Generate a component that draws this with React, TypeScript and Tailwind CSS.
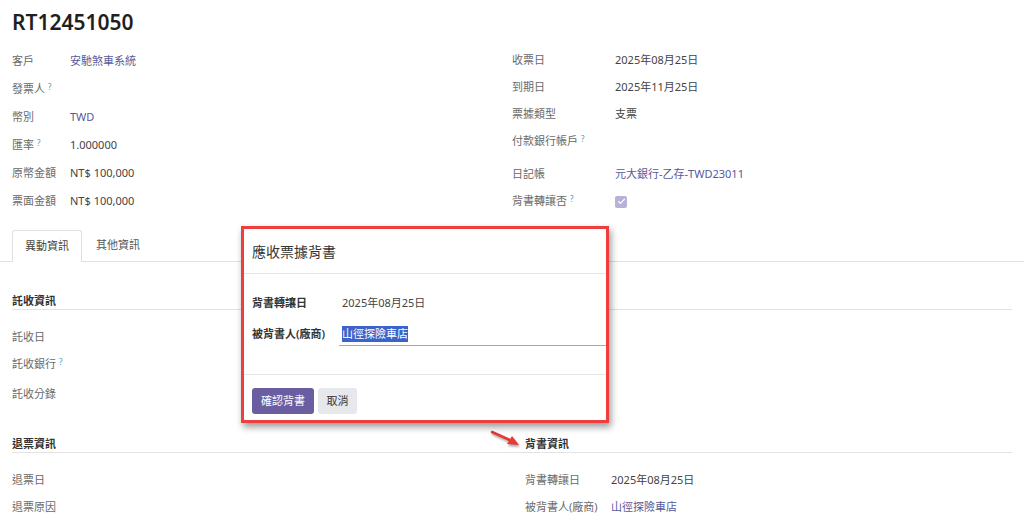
import { Check } from "lucide-react"

const LINK = "text-[#56599a]"

const Help = () => (
  <sup className="ml-[3px] text-[8px] text-[#4f93c4] relative -top-[3px]">?</sup>
)

const Field = ({
  label,
  value,
  help,
  link,
  labelW,
  h = "h-[28px]",
}: {
  label: string
  value?: React.ReactNode
  help?: boolean
  link?: boolean
  labelW: string
  h?: string
}) => (
  <div className={`flex items-center ${h}`}>
    <div className={`${labelW} shrink-0 text-[#6a6a6a]`}>
      {label}
      {help && <Help />}
    </div>
    <div className={link ? LINK : "text-[#444]"}>{value}</div>
  </div>
)

const SectionHeader = ({ title }: { title?: string }) => (
  <div className="leading-[16px] h-[17px] font-semibold text-[#333] border-b border-[#e3e3e3]">
    {title ?? "\u00a0"}
  </div>
)

const App = () => {
  return (
    <div className="relative w-[1024px] h-[530px] overflow-hidden bg-white text-[11px] font-['Noto_Sans','Noto_Sans_CJK_TC',sans-serif]">
      <div className="px-[12px] pt-[8px] text-[21px] leading-[28px] font-semibold text-[#1f1f1f]">
        RT12451050
      </div>

      {/* main fields */}
      <div className="grid grid-cols-[500px_1fr] px-[12px] mt-[11px]">
        <div className="flex flex-col">
          <Field labelW="w-[58px]" label="客戶" value="安馳煞車系統" link />
          <Field labelW="w-[58px]" label="發票人" help />
          <Field labelW="w-[58px]" label="幣別" value="TWD" link />
          <Field labelW="w-[58px]" label="匯率" help value="1.000000" />
          <Field labelW="w-[58px]" label="原幣金額" value="NT$ 100,000" />
          <Field labelW="w-[58px]" label="票面金額" value="NT$ 100,000" />
        </div>
        <div className="flex flex-col">
          <Field labelW="w-[103px]" h="h-[27px]" label="收票日" value="2025年08月25日" />
          <Field labelW="w-[103px]" h="h-[27px]" label="到期日" value="2025年11月25日" />
          <Field labelW="w-[103px]" h="h-[27px]" label="票據類型" value="支票" />
          <Field labelW="w-[103px]" h="h-[27px]" label="付款銀行帳戶" help />
          <div className="mt-[6px]">
            <Field labelW="w-[103px]" h="h-[27px]" label="日記帳" value="元大銀行-乙存-TWD23011" link />
          </div>
          <Field
            labelW="w-[103px]"
            h="h-[27px]"
            label="背書轉讓否"
            help
            value={
              <span className="flex items-center justify-center w-[12px] h-[12px] rounded-[2px] bg-[#b9b1d8]">
                <Check size={9} strokeWidth={3} className="text-white" />
              </span>
            }
          />
        </div>
      </div>

      {/* tabs */}
      <div className="mt-[15px] flex h-[32px] pl-[12px] border-b border-[#dee2e6]">
        <div className="-mb-px flex items-center px-[12px] bg-white border border-b-0 border-[#dee2e6] rounded-t-[3px] text-[#444]">
          異動資訊
        </div>
        <div className="flex items-center px-[14px] text-[#555]">其他資訊</div>
      </div>

      {/* tab content */}
      <div className="px-[12px]">
        <div className="grid grid-cols-[513px_1fr] mt-[31px]">
          <div className="flex flex-col">
            <SectionHeader title="託收資訊" />
            <div className="mt-[14px]">
              <Field labelW="w-[80px]" h="h-[27px]" label="託收日" />
              <Field labelW="w-[80px]" h="h-[27px]" label="託收銀行" help />
              <Field labelW="w-[80px]" h="h-[33px]" label="託收分錄" />
            </div>
          </div>
          <div className="flex flex-col">
            <SectionHeader />
          </div>
        </div>

        <div className="grid grid-cols-[513px_1fr] mt-[25px]">
          <div className="flex flex-col">
            <SectionHeader title="退票資訊" />
            <div className="mt-[14px]">
              <Field labelW="w-[80px]" h="h-[27px]" label="退票日" />
              <Field labelW="w-[80px]" h="h-[27px]" label="退票原因" />
            </div>
          </div>
          <div className="flex flex-col">
            <SectionHeader title="背書資訊" />
            <div className="mt-[14px]">
              <Field labelW="w-[86px]" h="h-[27px]" label="背書轉讓日" value="2025年08月25日" />
              <Field labelW="w-[86px]" h="h-[27px]" label="被背書人(廠商)" value="山徑探險車店" link />
            </div>
          </div>
        </div>
      </div>

      {/* annotation arrow */}
      <svg
        className="absolute left-[488px] top-[427px] drop-shadow-[1px_2px_1px_rgba(0,0,0,0.35)]"
        width="36"
        height="24"
        viewBox="0 0 36 24"
      >
        <line x1="4" y1="5" x2="24" y2="14" stroke="#e53935" strokeWidth="2.5" strokeLinecap="round" />
        <polygon points="31,18 19,17 24,9" fill="#e53935" />
      </svg>

      {/* endorsement dialog */}
      <div className="absolute left-[241px] top-[226px] w-[368px] h-[197px] flex flex-col bg-white border-[3px] border-[#ee3e3e] shadow-[2px_4px_7px_rgba(0,0,0,0.4)]">
        <div className="h-[45px] shrink-0 flex items-center px-[8px] text-[14px] text-[#333] border-b border-[#e5e5e5]">
          應收票據背書
        </div>
        <div className="h-[101px] shrink-0 flex flex-col pl-[8px] pt-[17px] gap-[7px] border-b border-[#e5e5e5]">
          <div className="flex items-center h-[24px]">
            <div className="w-[87px] shrink-0 font-semibold text-[#333]">背書轉讓日</div>
            <div className="pl-[3px] text-[#444]">2025年08月25日</div>
          </div>
          <div className="flex items-center h-[24px]">
            <div className="w-[87px] shrink-0 font-semibold text-[#333]">被背書人(廠商)</div>
            <div className="flex-1 h-[24px] flex items-center pl-[3px] border-b border-[#a8a3c7]">
              <span className="bg-[#3c63c9] text-white leading-[16px]">山徑探險車店</span>
            </div>
          </div>
        </div>
        <div className="flex gap-[4px] px-[8px] pt-[13px]">
          <button className="w-[62px] h-[26px] flex items-center justify-center rounded-[3px] bg-[#6b5ea0] text-white">
            確認背書
          </button>
          <button className="w-[39px] h-[26px] flex items-center justify-center rounded-[3px] bg-[#e6e8ec] text-[#333]">
            取消
          </button>
        </div>
      </div>
    </div>
  )
}

export default App
